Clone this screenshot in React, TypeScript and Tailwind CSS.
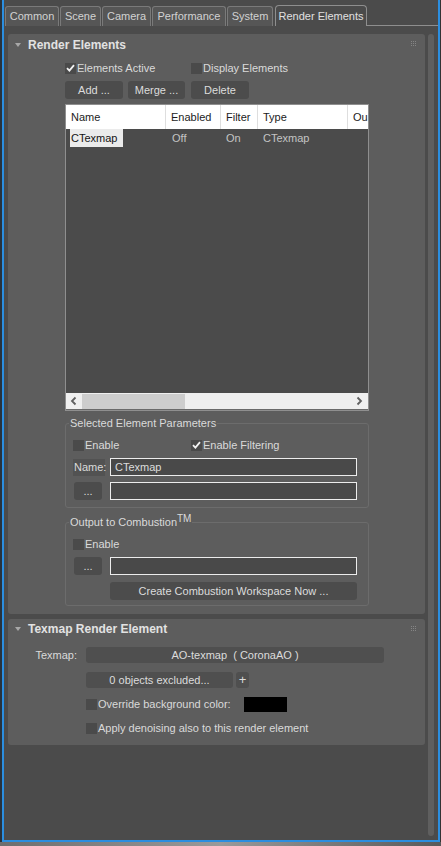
import React from 'react';

/* ── small pieces ── */
function Check({ checked = false }: { checked?: boolean }) {
  return (
    <span className="w-[11px] h-[11px] bg-[#4a4a4a] flex items-center justify-center shrink-0">
      {checked && (
        <svg width="9" height="8" viewBox="0 0 9 8">
          <path d="M1 4.2 L3.4 6.6 L8 1.2" stroke="#f2f2f2" strokeWidth="1.8" fill="none" />
        </svg>
      )}
    </span>
  );
}

function CheckRow({ label, checked, className = '' }: { label: string; checked?: boolean; className?: string }) {
  return (
    <div className={`flex items-center gap-[1px] ${className}`}>
      <Check checked={checked} />
      <span>{label}</span>
    </div>
  );
}

function Btn({ children, className = '' }: { children: React.ReactNode; className?: string }) {
  return (
    <div className={`bg-[#4c4c4c] rounded-[3px] flex items-center justify-center text-[#dcdcdc] ${className}`}>
      {children}
    </div>
  );
}

function Field({ value = '' }: { value?: string }) {
  return (
    <div className="w-[247px] h-[18px] border border-[#ececec] bg-[#494949] flex items-center pl-[4px] text-[#dcdcdc]">
      {value}
    </div>
  );
}

function PanelHeader({ title, h }: { title: string; h: string }) {
  return (
    <div className={`flex items-center ${h} relative`}>
      <span className="ml-[7px] w-0 h-0 border-l-[3px] border-r-[3px] border-t-[4px] border-l-transparent border-r-transparent border-t-[#a8a8a8]" />
      <span className="ml-[7px] font-bold text-[12px] text-[#e2e2e2]">{title}</span>
      <div className="absolute right-[9px] top-[7px] grid grid-cols-3 gap-[1px]">
        {Array.from({ length: 9 }).map((_, i) => (
          <span key={i} className="w-px h-px bg-[#858585]" />
        ))}
      </div>
    </div>
  );
}

function Group({ label, children, className = '' }: { label: React.ReactNode; children: React.ReactNode; className?: string }) {
  return (
    <div className={`relative w-[304px] border border-[#6c6c6c] rounded-[3px] ${className}`}>
      <span className="absolute -top-[8px] left-[3px] px-px bg-[#5d5d5d] text-[#dadada] leading-[14px] whitespace-nowrap">{label}</span>
      {children}
    </div>
  );
}

const tabs = [
  { name: 'Common', w: 'w-[54px]' },
  { name: 'Scene', w: 'w-[41px]' },
  { name: 'Camera', w: 'w-[49px]' },
  { name: 'Performance', w: 'w-[74px]' },
  { name: 'System', w: 'w-[46px]' },
];

export default function App() {
  return (
    <div className="w-[441px] h-[846px] bg-[#2f3a46] flex flex-col font-['Liberation_Sans',Arial,sans-serif] text-[11px] text-[#dadada] overflow-hidden">
      <div className="flex h-[842px]">
        <div className="w-[2px] bg-[#28323c]" />
        <div className="w-[438px] h-[842px] border-x-2 border-b-2 border-[#2b8ee0] bg-[#4b4b4b] flex flex-col">
          {/* tabs */}
          <div className="flex items-end h-[26px] pl-[1px]">
            {tabs.map((t) => (
              <div
                key={t.name}
                className={`${t.w} h-[20px] mr-[1px] border border-b-0 border-[#7a7a7a] rounded-t-[3px] bg-[#565656] flex items-center justify-center text-[#d2d2d2]`}
              >
                {t.name}
              </div>
            ))}
            <div className="ml-[1px] w-[92px] h-[21px] border border-b-0 border-[#8e8e8e] rounded-t-[4px] bg-[#4b4b4b] flex items-center justify-center text-[#e0e0e0]">
              Render Elements
            </div>
            <div className="flex-1 h-px bg-[#8e8e8e]" />
          </div>

          {/* main */}
          <div className="flex flex-1 mt-[8px] pl-[4px]">
            <div className="w-[417px] flex flex-col gap-[5px]">
              {/* panel 1 */}
              <div className="h-[580px] bg-[#5d5d5d] rounded-[3px] flex flex-col">
                <PanelHeader title="Render Elements" h="h-[22px]" />
                <div className="ml-[57px] flex flex-col">
                  <div className="flex items-center mt-[4px] h-[16px]">
                    <CheckRow label="Elements Active" checked className="w-[126px]" />
                    <CheckRow label="Display Elements" />
                  </div>
                  <div className="flex mt-[5px] h-[18px]">
                    <Btn className="w-[58px]">Add ...</Btn>
                    <Btn className="w-[57px] ml-[5px]">Merge ...</Btn>
                    <Btn className="w-[58px] ml-[6px]">Delete</Btn>
                  </div>

                  {/* list */}
                  <div className="mt-[5px] w-[304px] h-[307px] border border-[#8f8f8f] flex flex-col">
                    <div className="h-[24px] bg-white flex text-[#1c1c1c]">
                      <div className="w-[100px] border-r border-[#dedede] flex items-center pl-[5px]">Name</div>
                      <div className="w-[55px] border-r border-[#dedede] flex items-center pl-[5px]">Enabled</div>
                      <div className="w-[37px] border-r border-[#dedede] flex items-center pl-[5px]">Filter</div>
                      <div className="w-[90px] border-r border-[#dedede] flex items-center pl-[5px]">Type</div>
                      <div className="flex-1 flex items-center pl-[5px] overflow-hidden">Ou</div>
                    </div>
                    <div className="flex-1 bg-[#4b4b4b]">
                      <div className="h-[18px] flex text-[#c4c4c4]">
                        <div className="w-[100px] pl-[4px] flex items-center">
                          <span className="h-[18px] w-[53px] bg-[#ebebeb] text-[#141414] flex items-center pl-[1px]">CTexmap</span>
                        </div>
                        <div className="w-[55px] pl-[6px] flex items-center">Off</div>
                        <div className="w-[37px] pl-[5px] flex items-center">On</div>
                        <div className="w-[90px] pl-[5px] flex items-center">CTexmap</div>
                      </div>
                    </div>
                    <div className="h-[17px] bg-[#efefef] flex items-center border-b border-[#6a6a6a]">
                      <svg width="16" height="16" viewBox="0 0 16 16" className="shrink-0">
                        <path d="M9.5 4.5 L6 8 L9.5 11.5" stroke="#606060" strokeWidth="1.8" fill="none" />
                      </svg>
                      <div className="w-[103px] h-[15px] bg-[#cdcdcd]" />
                      <div className="flex-1" />
                      <svg width="16" height="16" viewBox="0 0 16 16" className="shrink-0 mr-[1px]">
                        <path d="M6.5 4.5 L10 8 L6.5 11.5" stroke="#606060" strokeWidth="1.8" fill="none" />
                      </svg>
                    </div>
                  </div>

                  {/* selected element parameters */}
                  <Group label="Selected Element Parameters" className="mt-[12px] h-[85px]">
                    <div className="pl-[7px] flex flex-col">
                      <div className="flex items-center mt-[13px] h-[16px]">
                        <CheckRow label="Enable" className="w-[118px]" />
                        <CheckRow label="Enable Filtering" checked />
                      </div>
                      <div className="flex items-center mt-[5px] h-[18px]">
                        <span className="w-[32px] h-[17px] bg-[#525252] flex items-center pl-[1px]">Name:</span>
                        <div className="ml-[5px]"><Field value="CTexmap" /></div>
                      </div>
                      <div className="flex items-center mt-[6px] h-[18px]">
                        <Btn className="ml-[1px] w-[28px] h-[18px]">...</Btn>
                        <div className="ml-[8px]"><Field /></div>
                      </div>
                    </div>
                  </Group>

                  {/* combustion */}
                  <Group
                    label={<>Output to Combustion<span className="relative -top-[4px] text-[10px]">TM</span></>}
                    className="mt-[14px] h-[84px]"
                  >
                    <div className="pl-[7px] flex flex-col">
                      <div className="flex items-center mt-[13px] h-[16px]">
                        <CheckRow label="Enable" />
                      </div>
                      <div className="flex items-center mt-[5px] h-[18px]">
                        <Btn className="ml-[1px] w-[28px] h-[18px]">...</Btn>
                        <div className="ml-[8px]"><Field /></div>
                      </div>
                      <div className="flex mt-[7px] h-[18px] pl-[37px]">
                        <Btn className="w-[247px] h-[18px]">Create Combustion Workspace Now ...</Btn>
                      </div>
                    </div>
                  </Group>
                </div>
              </div>

              {/* panel 2 */}
              <div className="h-[126px] bg-[#5d5d5d] rounded-[3px] flex flex-col">
                <PanelHeader title="Texmap Render Element" h="h-[20px]" />
                <div className="flex items-center mt-[8px] h-[16px]">
                  <span className="w-[78px] text-right pr-[9px]">Texmap:</span>
                  <Btn className="w-[298px] h-[16px] bg-[#4f4f4f]">AO-texmap&nbsp; ( CoronaAO )</Btn>
                </div>
                <div className="flex items-center mt-[9px] h-[16px] pl-[78px]">
                  <Btn className="w-[147px] h-[16px] bg-[#4f4f4f]">0 objects excluded...</Btn>
                  <Btn className="ml-[3px] w-[13px] h-[16px] bg-[#4f4f4f] text-[13px]">+</Btn>
                </div>
                <div className="flex items-center mt-[8px] h-[16px] pl-[78px]">
                  <CheckRow label="Override background color:" className="w-[158px]" />
                  <div className="w-[43px] h-[15px] bg-black" />
                </div>
                <div className="flex items-center mt-[8px] h-[16px] pl-[78px]">
                  <CheckRow label="Apply denoising also to this render element" />
                </div>
              </div>
            </div>
            <div className="ml-[3px] mb-[4px] w-[6px] rounded-full bg-[#5f5f5f]" />
          </div>
        </div>
        <div className="w-px bg-[#333]" />
      </div>
      <div className="h-[4px] bg-gradient-to-r from-[#6e6e6e] via-[#9a9a9a] to-[#5a5a5a]" />
    </div>
  );
}
